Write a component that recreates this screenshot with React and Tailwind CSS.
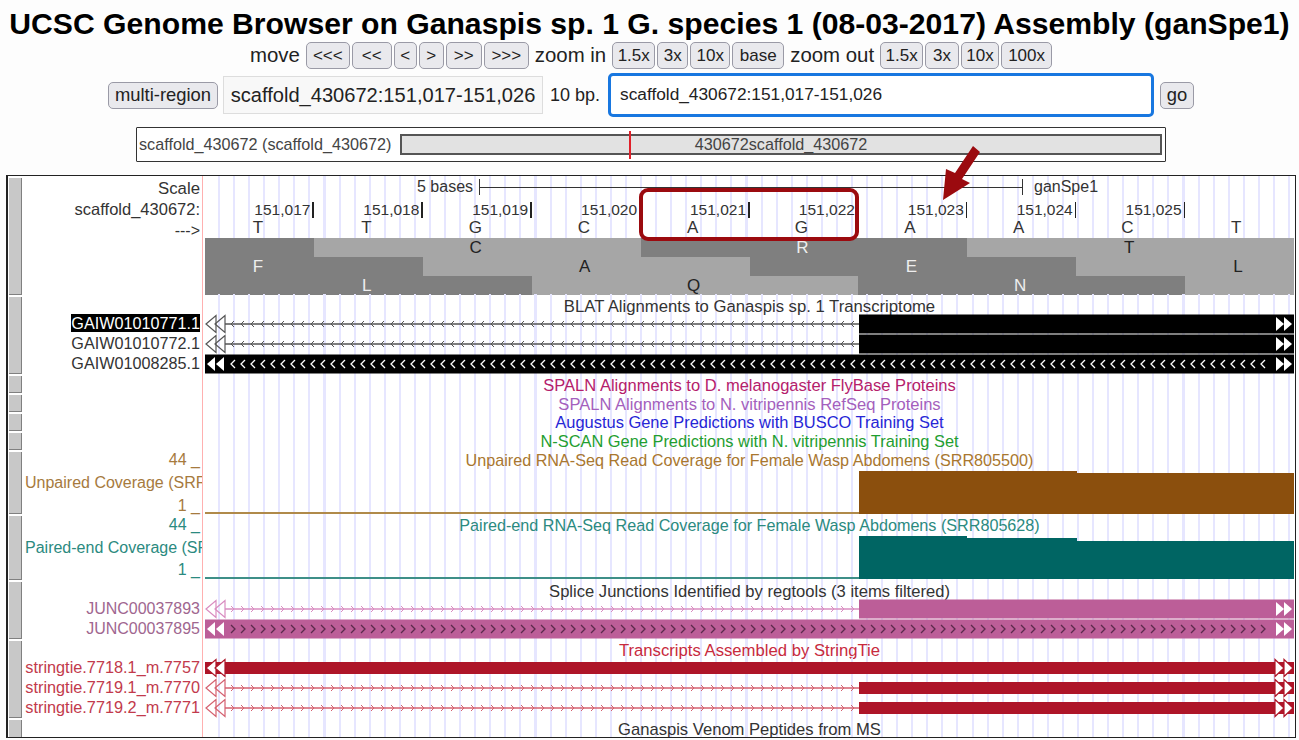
import React from "react";

// track area is 1089px wide, exons of the gapped items start at 654px
const TRACK_W = 1089;
const EXON_X = 654;
const GUIDES = "bg-[repeating-linear-gradient(90deg,transparent_0,transparent_13px,#e6e6ff_13px,#e6e6ff_15.07px)]";

const Btn = ({ className = "", size = "text-[17px]", children }) => (
    <button className={`h-[27px] shrink-0 rounded-[5px] border border-[#9a9aa6] bg-[#e9e9ed] leading-none whitespace-nowrap text-[#222] ${size} ${className}`}>
        {children}
    </button>
);

const tri = (dir, x, w, h, y = 10) =>
    dir === "left"
        ? `${x},${y} ${x + w},${y - h} ${x + w},${y + h}`
        : `${x + w},${y} ${x},${y - h} ${x},${y + h}`;

const chevrons = (dir, from, to, size) => {
    const out = [];
    for (let x = from; x < to; x += 10) {
        const pts = dir === "left"
            ? `${x + size},${10 - size} ${x},10 ${x + size},${10 + size}`
            : `${x},${10 - size} ${x + size},10 ${x},${10 + size}`;
        out.push(pts);
    }
    return out;
};

// A gapped alignment: thin intron line with chevrons, then a solid exon
const Gapped = ({ color, lineColor, dir, exonH = 19, rightOutline = false }) => (
    <svg width={TRACK_W} height="20" className="block">
        <line x1="20" y1="10" x2={EXON_X} y2="10" stroke={lineColor} strokeWidth="1.4" />
        {chevrons(dir, 26, EXON_X - 4, 3).map((p) => (
            <polyline key={p} points={p} fill="none" stroke={lineColor} strokeWidth="1" />
        ))}
        <polygon points={tri("left", 1, 10, 8.5)} fill="#fff" stroke={lineColor} strokeWidth="1.2" />
        <polygon points={tri("left", 10, 10, 8.5)} fill="none" stroke={lineColor} strokeWidth="1.2" />
        <rect x={EXON_X} y={10 - exonH / 2} width={TRACK_W - EXON_X} height={exonH} fill={color} />
        {rightOutline ? (
            <>
                <polygon points={tri("right", 1070, 9, 8.5)} fill="#fff" stroke={color} strokeWidth="1.2" />
                <polygon points={tri("right", 1079, 9, 8.5)} fill="#fff" stroke={color} strokeWidth="1.2" />
            </>
        ) : (
            <>
                <polygon points={tri("right", 1071, 8, 7)} fill="#fff" />
                <polygon points={tri("right", 1079, 8, 7)} fill="#fff" />
            </>
        )}
    </svg>
);

// A single block over the whole window, chevrons drawn on the block
const Solid = ({ color, chevronColor, dir }) => (
    <svg width={TRACK_W} height="20" className="block">
        <rect x="0" y="0.5" width={TRACK_W} height="19" fill={color} />
        {chevrons(dir, 26, 1064, 4).map((p) => (
            <polyline key={p} points={p} fill="none" stroke={chevronColor} strokeWidth="1.3" />
        ))}
        <polygon points={tri("left", 2, 8, 7)} fill="#fff" />
        <polygon points={tri("left", 11, 8, 7)} fill="#fff" />
        <polygon points={tri("right", 1071, 8, 7)} fill="#fff" />
        <polygon points={tri("right", 1079, 8, 7)} fill="#fff" />
    </svg>
);

const RedBar = ({ color }) => (
    <svg width={TRACK_W} height="20" className="block">
        <rect x="0" y="4" width={TRACK_W} height="12" fill={color} />
        <polygon points={tri("left", 1, 10, 8.5)} fill="#fff" stroke={color} strokeWidth="1.2" />
        <polygon points={tri("left", 10, 10, 8.5)} fill="#fff" stroke={color} strokeWidth="1.2" />
        <polygon points={tri("right", 1070, 9, 8.5)} fill="#fff" stroke={color} strokeWidth="1.2" />
        <polygon points={tri("right", 1079, 9, 8.5)} fill="#fff" stroke={color} strokeWidth="1.2" />
    </svg>
);

const Row = ({ className = "", label, children }) => (
    <div className={`flex shrink-0 ${className}`}>
        <div className="w-[181px] shrink-0 overflow-hidden border-r border-[#ffb0b0] pr-[2px] text-right whitespace-nowrap">
            {label}
        </div>
        <div className={`ml-[2px] w-[1089px] shrink-0 ${GUIDES}`}>{children}</div>
    </div>
);

const Title = ({ className = "", textClass = "", text }) => (
    <Row className={className}>
        <div className={`text-center whitespace-nowrap ${textClass}`}>{text}</div>
    </Row>
);

const Feature = ({ name, color, size = "text-[16px]", selected, children }) => (
    <Row
        className="h-[20px]"
        label={<span className={`block leading-[19px] ${size}`}><span className={`${color} ${selected ? "bg-black text-white" : ""}`}>{name}</span></span>}
    >
        {children}
    </Row>
);

const SIDE_SEGMENTS = [
    "h-[117px]", "h-[77px]", "h-[17px]", "h-[17px]", "h-[17px]", "h-[17px]",
    "h-[62px]", "h-[64px]", "h-[57px]", "h-[77px]", "h-[18px]",
];

const POSITIONS = ["151,017", "151,018", "151,019", "151,020", "151,021", "151,022", "151,023", "151,024", "151,025"];
const BASES = ["T", "T", "G", "C", "A", "G", "A", "A", "C", "T"];

// one entry per base: letter shown on the codon row and whether the cell is dark
const CODONS = [
    { h: "h-[19px]", cells: [["", 1], ["", 0], ["C", 0], ["", 0], ["", 1], ["R", 1], ["", 1], ["", 0], ["T", 0], ["", 0]] },
    { h: "h-[19px]", cells: [["F", 1], ["", 1], ["", 0], ["A", 0], ["", 0], ["", 1], ["E", 1], ["", 1], ["", 0], ["L", 0]] },
    { h: "h-[18px]", cells: [["", 1], ["L", 1], ["", 1], ["", 0], ["Q", 0], ["", 0], ["", 1], ["N", 1], ["", 1], ["", 0]] },
];

const Coverage = ({ line, fill, bars }) => (
    <div className="flex h-[45px] items-end pb-[1px]">
        <div className={`h-[2px] w-[654px] ${line}`} />
        {bars.map((cls) => (
            <div key={cls} className={`${fill} ${cls}`} />
        ))}
    </div>
);

const App = () => (
    <div className="relative h-[740px] w-[1299px] overflow-hidden bg-[#fdfdfd] font-['Liberation_Sans',Arial,sans-serif] text-[16px] text-[#333]">
        <h1 className="h-[42px] pt-[4px] text-center text-[30.15px] leading-[40px] font-bold whitespace-nowrap text-black">
            UCSC Genome Browser on Ganaspis sp. 1 G. species 1 (08-03-2017) Assembly (ganSpe1)
        </h1>

        {/* Navigation */}
        <div className="flex h-[27px] items-center justify-center gap-[2px] pl-[3px] text-[20.4px] whitespace-nowrap text-[#222]">
            <span className="mr-[4px]">move</span>
            <Btn className="w-[44px]">&lt;&lt;&lt;</Btn>
            <Btn className="w-[40px]">&lt;&lt;</Btn>
            <Btn className="w-[23px]">&lt;</Btn>
            <Btn className="w-[25px]">&gt;</Btn>
            <Btn className="w-[36px]">&gt;&gt;</Btn>
            <Btn className="w-[45px]">&gt;&gt;&gt;</Btn>
            <span className="mx-[4px]">zoom in</span>
            <Btn className="w-[43px]">1.5x</Btn>
            <Btn className="w-[31px]">3x</Btn>
            <Btn className="w-[40px]">10x</Btn>
            <Btn className="w-[52px]">base</Btn>
            <span className="mx-[4px]">zoom out</span>
            <Btn className="w-[43px]">1.5x</Btn>
            <Btn className="w-[34px]">3x</Btn>
            <Btn className="w-[38px]">10x</Btn>
            <Btn className="w-[51px]">100x</Btn>
        </div>

        <div className="mt-[4px] flex h-[44px] items-center justify-center pl-[3px] text-[#222]">
            <Btn className="w-[110px]" size="text-[18.4px]">multi-region</Btn>
            <div className="ml-[5px] flex h-[38px] w-[320px] items-center justify-center border border-[#ddd] bg-[#f8f8f8] text-[20.1px] whitespace-nowrap">
                scaffold_430672:151,017-151,026
            </div>
            <span className="ml-[7px] w-[47px] text-[18px] whitespace-nowrap">10 bp.</span>
            <div className="ml-[11px] flex h-[44px] w-[546px] items-center rounded-[5px] border-[3px] border-[#1877e0] bg-white pl-[9px] text-[17.3px]">
                scaffold_430672:151,017-151,026
            </div>
            <Btn className="ml-[6px] w-[34px]" size="text-[18.4px]">go</Btn>
        </div>

        {/* Chromosome ideogram */}
        <div className="mt-[10px] ml-[136px] flex h-[35px] w-[1030px] items-center rounded-[1px] border border-[#333] bg-white pl-[2px] text-[16.2px] text-[#444]">
            <span className="w-[253px] whitespace-nowrap">scaffold_430672 (scaffold_430672)</span>
            <div className="relative ml-[8px] flex h-[21px] w-[762px] items-center justify-center border-2 border-[#555] bg-[#e2e2e2]">
                430672scaffold_430672
                <div className="absolute top-[-5px] left-[227px] h-[28px] w-[2px] bg-[#e0202a]" />
            </div>
        </div>

        {/* Browser image */}
        <div className="mt-[13px] ml-[6px] flex h-[563px] w-[1290px] overflow-hidden border border-l-2 border-[#222] bg-white">
            <div className="ml-[1px] flex w-[13px] shrink-0 flex-col gap-[2px] pt-[2px]">
                {SIDE_SEGMENTS.map((h, i) => (
                    <div key={i} className={`${h} shrink-0 border-r border-b border-[#808080] bg-[#c8c8c8]`} />
                ))}
            </div>
            <div className="flex flex-col">
                <Row className="h-[21px]" label={<span className="text-[16.8px] leading-[26px]">Scale</span>}>
                    <div className="flex h-full items-center pt-[1px] text-[16px]">
                        <span className="ml-[212px] w-[62px]">5 bases</span>
                        <div className="h-[16px] w-[544px] border-x border-[#333] bg-[linear-gradient(#333,#333)] bg-[length:100%_1px] bg-center bg-no-repeat" />
                        <span className="ml-[11px]">ganSpe1</span>
                    </div>
                </Row>
                <Row className="h-[22px]" label={<span className="block pt-[3px] text-[16.5px] leading-[19px]">scaffold_430672:</span>}>
                    <div className="grid h-full grid-cols-10 pt-[3px] text-[15.5px]">
                        {POSITIONS.map((p) => (
                            <div key={p} className="flex h-[19px] items-center justify-end">
                                <span className="mr-[2px]">{p}</span>
                                <span className="h-[16px] w-[1.5px] bg-[#222]" />
                            </div>
                        ))}
                    </div>
                </Row>
                <Row className="h-[19px]" label={<span className="leading-[18px]">---&gt;</span>}>
                    <div className="grid grid-cols-10 pr-[2px] text-center text-[17px] leading-[17px]">
                        {BASES.map((b, i) => (
                            <span key={i} className="pr-[3px]">{b}</span>
                        ))}
                    </div>
                </Row>
                {CODONS.map((row) => (
                    <Row key={row.h + row.cells[0][0]} className={row.h}>
                        <div className="grid h-full grid-cols-10 text-center text-[17px] leading-[19px]">
                            {row.cells.map(([letter, dark], i) => (
                                <span key={i} className={`pr-[3px] ${dark ? "bg-[#7f7f7f] text-[#eee]" : "bg-[#a6a6a6] text-[#222]"}`}>{letter}</span>
                            ))}
                        </div>
                    </Row>
                ))}

                <Title className="h-[20px]" textClass="pt-[3px] text-[16.7px] leading-[20px]" text="BLAT Alignments to Ganaspis sp. 1 Transcriptome" />
                <Feature name="GAIW01010771.1" color="text-[#333]" size="text-[16.2px]" selected>
                    <Gapped color="#000" lineColor="#555" dir="left" />
                </Feature>
                <Feature name="GAIW01010772.1" color="text-[#333]" size="text-[16.2px]">
                    <Gapped color="#000" lineColor="#555" dir="left" />
                </Feature>
                <Feature name="GAIW01008285.1" color="text-[#333]" size="text-[16.2px]">
                    <Solid color="#000" chevronColor="#fff" dir="left" />
                </Feature>

                <Title className="h-[19px]" textClass="pt-[2px] text-[16.56px] leading-[19px] text-[#b5206b]" text="SPALN Alignments to D. melanogaster FlyBase Proteins" />
                <Title className="h-[19px]" textClass="pt-[2px] text-[16.56px] leading-[19px] text-[#a45fbd]" text="SPALN Alignments to N. vitripennis RefSeq Proteins" />
                <Title className="h-[19px]" textClass="pt-[1px] text-[16.46px] leading-[19px] text-[#2626d6]" text="Augustus Gene Predictions with BUSCO Training Set" />
                <Title className="h-[20px]" textClass="pt-[1px] text-[16.4px] leading-[19px] text-[#1f9e30]" text="N-SCAN Gene Predictions with N. vitripennis Training Set" />

                <Row
                    className="h-[64px]"
                    label={
                        <div className="flex h-full flex-col justify-between text-[#a67a3e]">
                            <span className="leading-[18px]">44 _</span>
                            <span className="pl-[3px] text-left leading-[20px]">Unpaired Coverage (SRR805500)</span>
                            <span className="leading-[18px]">1 _</span>
                        </div>
                    }
                >
                    <div className="h-[19px] text-center text-[16.2px] leading-[19px] whitespace-nowrap text-[#a9772f]">
                        Unpaired RNA-Seq Read Coverage for Female Wasp Abdomens (SRR805500)
                    </div>
                    <Coverage line="bg-[#b08a4a]" fill="bg-[#8b4f0d]" bars={["h-[43px] w-[218px]", "h-[41px] w-[217px]"]} />
                </Row>
                <Row
                    className="h-[66px]"
                    label={
                        <div className="flex h-full flex-col justify-between pt-[1px] pb-[2px] text-[#2b8a80]">
                            <span className="leading-[18px]">44 _</span>
                            <span className="pl-[3px] text-left leading-[20px]">Paired-end Coverage (SRR805628)</span>
                            <span className="leading-[18px]">1 _</span>
                        </div>
                    }
                >
                    <div className="h-[20px] text-center text-[16.17px] leading-[21px] whitespace-nowrap text-[#2b8a80]">
                        Paired-end RNA-Seq Read Coverage for Female Wasp Abdomens (SRR805628)
                    </div>
                    <Coverage line="bg-[#3e8f88]" fill="bg-[#006563]" bars={["h-[43px] w-[108px]", "h-[41px] w-[110px]", "h-[38px] w-[217px]"]} />
                </Row>

                <Title className="h-[18px]" textClass="pt-[1px] text-[16.58px] leading-[19px]" text="Splice Junctions Identified by regtools (3 items filtered)" />
                <Feature name="JUNC00037893" color="text-[#a0668f]">
                    <Gapped color="#bc5e98" lineColor="#d98cc0" dir="right" />
                </Feature>
                <Feature name="JUNC00037895" color="text-[#a0668f]">
                    <Solid color="#bc5e98" chevronColor="#5b2a4c" dir="right" />
                </Feature>

                <Title className="h-[19px]" textClass="pt-[1px] text-[16.7px] leading-[22px] text-[#c82a3d]" text="Transcripts Assembled by StringTie" />
                <Feature name="stringtie.7718.1_m.7757" color="text-[#c23a4c]" size="text-[16.3px]">
                    <RedBar color="#ae1528" />
                </Feature>
                <Feature name="stringtie.7719.1_m.7770" color="text-[#c23a4c]" size="text-[16.3px]">
                    <Gapped color="#ae1528" lineColor="#d4606f" dir="right" exonH={12} rightOutline />
                </Feature>
                <Feature name="stringtie.7719.2_m.7771" color="text-[#c23a4c]" size="text-[16.3px]">
                    <Gapped color="#ae1528" lineColor="#d4606f" dir="right" exonH={12} rightOutline />
                </Feature>
                <Title className="h-[19px]" textClass="pt-[3px] text-[16.6px] leading-[18px]" text="Ganaspis Venom Peptides from MS" />
            </div>
        </div>

        {/* Hand-drawn annotations on top of the figure */}
        <div className="absolute top-[188px] left-[639px] h-[53px] w-[220px] rounded-[9px] border-4 border-[#9b0a0f]" />
        <svg className="absolute top-[145px] left-[935px]" width="50" height="60">
            <polygon points="38,1 45,7 27,34 35,38 8,55 11,24 20,28" fill="#9b0a0f" />
        </svg>
    </div>
);

export default App;
